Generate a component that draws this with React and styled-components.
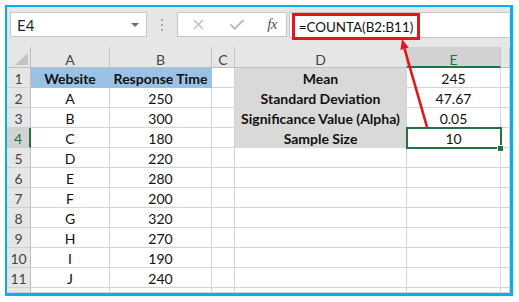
import React from 'react'
import styled, { createGlobalStyle, css } from 'styled-components'
import { X, Check } from 'lucide-react'

const GlobalStyle = createGlobalStyle`
  body {
    margin: 0;
    background: #fff;
    font-family: Lato, "Open Sans", sans-serif;
  }
`

const green = '#217346'
const grid = '#d4d4d4'

const columns = ['A', 'B', 'C', 'D', 'E', '']

const rows = [
  ['Website', 'Response Time', '', 'Mean', '245'],
  ['A', '250', '', 'Standard Deviation', '47.67'],
  ['B', '300', '', 'Significance Value (Alpha)', '0.05'],
  ['C', '180', '', 'Sample Size', '10'],
  ['D', '220', '', '', ''],
  ['E', '280', '', '', ''],
  ['F', '200', '', '', ''],
  ['G', '320', '', '', ''],
  ['H', '270', '', '', ''],
  ['I', '190', '', '', ''],
  ['J', '240', '', '', ''],
]

const App = () => {
  return (
    <>
      <GlobalStyle />
      <Frame>
        <Toolbar>
          <NameBox>
            E4
            <Caret />
          </NameBox>
          <Grip>
            <i />
            <i />
            <i />
          </Grip>
          <Buttons>
            <X size={17} strokeWidth={1.6} color="#b9b9b9" />
            <Check size={18} strokeWidth={2.4} color="#b9b9b9" />
            <Fx>fx</Fx>
          </Buttons>
          <FormulaInput>
            <Highlight>=COUNTA(B2:B11)</Highlight>
          </FormulaInput>
        </Toolbar>

        <Sheet>
          <Corner>
            <svg width="13" height="12" viewBox="0 0 13 12">
              <polygon points="13,0 13,12 0,12" fill="#c3c3c3" />
            </svg>
          </Corner>
          {columns.map((c, i) => (
            <ColHead key={i} $active={c === 'E'}>
              {c}
            </ColHead>
          ))}

          {rows.map((r, ri) => {
            const n = ri + 1
            return (
              <React.Fragment key={n}>
                <RowHead $active={n === 4}>{n}</RowHead>
                <Cell $fill={n === 1 ? '#9bc2e6' : null} $bold={n === 1}>
                  {r[0]}
                </Cell>
                <Cell $fill={n === 1 ? '#9bc2e6' : null} $bold={n === 1}>
                  {r[1]}
                </Cell>
                <Cell>{r[2]}</Cell>
                <Cell $fill={n <= 4 ? '#d9d9d9' : null} $bold $keepRight>
                  {r[3]}
                </Cell>
                <Cell $selected={n === 4}>
                  {r[4]}
                  {n === 4 && <Handle />}
                </Cell>
                <Cell />
              </React.Fragment>
            )
          })}

          <RowHead />
          <Cell />
          <Cell />
          <Cell />
          <Cell />
          <Cell />
          <Cell />
        </Sheet>

        <Arrow viewBox="0 0 503 286">
          <line x1="420" y1="120" x2="397.5" y2="41.6" stroke="#e8141b" strokeWidth="2.6" />
          <polygon points="395,32 401.6,40.6 393.4,43" fill="#e8141b" />
        </Arrow>
      </Frame>
    </>
  )
}

export default App

const Frame = styled.div`
  position: relative;
  box-sizing: border-box;
  margin: 5px 0 0 5px;
  width: 508px;
  height: 291px;
  border: solid #00b0f0;
  border-width: 2px 3px 3px 2px;
  background: #fff;
  overflow: hidden;
  display: flex;
  flex-direction: column;
`

const Toolbar = styled.div`
  flex: 0 0 40px;
  box-sizing: border-box;
  display: flex;
  align-items: flex-start;
  padding: 5px 1px 0 3px;
  background: #e6e6e6;
`

const box = css`
  box-sizing: border-box;
  background: #fff;
  border: 1px solid #c6c6c6;
`

const NameBox = styled.div`
  ${box}
  width: 137px;
  height: 25px;
  display: flex;
  align-items: center;
  justify-content: space-between;
  padding: 0 7px 0 6px;
  font-size: 15px;
  color: #262626;
`

const Caret = styled.span`
  width: 0;
  height: 0;
  border-left: 4px solid transparent;
  border-right: 4px solid transparent;
  border-top: 4px solid #6f6f6f;
`

const Grip = styled.div`
  width: 30px;
  height: 25px;
  display: flex;
  flex-direction: column;
  align-items: center;
  justify-content: center;
  gap: 3px;

  i {
    display: block;
    width: 2px;
    height: 2px;
    background: #a8a8a8;
  }
`

const Buttons = styled.div`
  ${box}
  width: 110px;
  height: 25px;
  display: flex;
  align-items: center;
  justify-content: space-between;
  padding: 0 9px 0 12px;
`

const Fx = styled.span`
  font-family: "Liberation Serif", serif;
  font-style: italic;
  font-size: 15px;
  color: #555;
  letter-spacing: -0.5px;
`

const FormulaInput = styled.div`
  ${box}
  flex: 1;
  height: 26px;
  margin-left: 2px;
  padding-left: 2px;
  border-right: none;
`

const Highlight = styled.div`
  box-sizing: border-box;
  width: 128px;
  height: 27px;
  border: 3px solid #e8141b;
  display: flex;
  align-items: center;
  justify-content: center;
  padding-top: 1px;
  font-size: 13.4px;
  color: #111;
`

const Sheet = styled.div`
  flex: 1;
  display: grid;
  grid-template-columns: 24px 79px 102px 23px 172px 94px 1fr;
  grid-template-rows: 21px repeat(11, 20px) 1fr;
  font-size: 14px;
`

const headBase = css`
  box-sizing: border-box;
  display: flex;
  align-items: center;
  justify-content: center;
  background: #e6e6e6;
  color: #444;
`

const Corner = styled.div`
  ${headBase}
  border-right: 1px solid #bdbdbd;
  border-bottom: 1px solid #bdbdbd;
  padding: 3px 2px 2px 7px;
  align-items: flex-end;
  justify-content: flex-end;
`

const ColHead = styled.div`
  ${headBase}
  padding-top: 4px;
  border-right: 1px solid #c4c4c4;
  border-bottom: 1px solid #bdbdbd;

  ${(p) =>
    p.$active &&
    css`
      background: #d2d2d2;
      color: ${green};
      border-bottom: 2px solid ${green};
      padding-top: 5px;
    `}
`

const RowHead = styled.div`
  ${headBase}
  padding-top: 1px;
  border-right: 1px solid #bdbdbd;
  border-bottom: 1px solid #d0d0d0;

  ${(p) =>
    p.$active &&
    css`
      background: #d2d2d2;
      color: ${green};
      border-right: 2px solid ${green};
    `}
`

const Cell = styled.div`
  position: relative;
  box-sizing: border-box;
  display: flex;
  align-items: center;
  justify-content: center;
  padding-top: 1px;
  white-space: nowrap;
  color: #111;
  font-weight: ${(p) => (p.$bold ? 700 : 400)};
  border-right: 1px solid ${(p) => (p.$fill && !p.$keepRight ? p.$fill : grid)};
  border-bottom: 1px solid ${(p) => p.$fill || grid};
  background: ${(p) => p.$fill || '#fff'};

  ${(p) =>
    p.$selected &&
    css`
      z-index: 1;

      &::before {
        content: '';
        position: absolute;
        left: -1px;
        top: -1px;
        width: 96px;
        height: 22px;
        box-sizing: border-box;
        border: 2px solid ${green};
      }
    `}
`

const Handle = styled.span`
  position: absolute;
  left: 90px;
  top: 17px;
  width: 5px;
  height: 5px;
  background: ${green};
  border: 1px solid #fff;
`

const Arrow = styled.svg`
  position: absolute;
  left: 0;
  top: 0;
  width: 503px;
  height: 286px;
  pointer-events: none;
  z-index: 2;
`
